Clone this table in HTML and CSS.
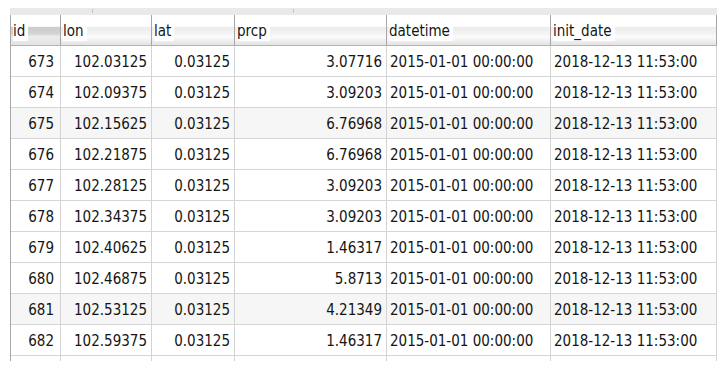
FILE: index.html
```html
<!DOCTYPE html>
<html lang="en">
<head>
    <meta charset="UTF-8">
    <title>Query Result</title>
    <link rel="stylesheet" href="styles.css">
</head>
<body>
    <div class="wrap">
        <div class="strip">
            <span class="tick tick-a"></span>
            <span class="tick tick-b"></span>
        </div>
        <div class="grid" id="grid">
            <div class="hd sorted"><span>id</span></div>
            <div class="hd"><span>lon</span></div>
            <div class="hd"><span>lat</span></div>
            <div class="hd"><span>prcp</span></div>
            <div class="hd"><span>datetime</span></div>
            <div class="hd"><span>init_date</span></div>
        </div>
    </div>

    <script>
        const grid = document.getElementById('grid');

        const rows = [
            [673, '102.03125', '3.07716'],
            [674, '102.09375', '3.09203'],
            [675, '102.15625', '6.76968'],
            [676, '102.21875', '6.76968'],
            [677, '102.28125', '3.09203'],
            [678, '102.34375', '3.09203'],
            [679, '102.40625', '1.46317'],
            [680, '102.46875', '5.8713'],
            [681, '102.53125', '4.21349'],
            [682, '102.59375', '1.46317']
        ];

        // Build data rows
        rows.forEach(([id, lon, prcp]) => {
            const shade = (id === 675 || id === 681) ? ' shade' : '';
            grid.insertAdjacentHTML('beforeend', `
                <div class="cell num${shade}"><span>${id}</span></div>
                <div class="cell num${shade}"><span>${lon}</span></div>
                <div class="cell num${shade}"><span>0.03125</span></div>
                <div class="cell num${shade}"><span>${prcp}</span></div>
                <div class="cell${shade}"><span>2015-01-01 00:00:00</span></div>
                <div class="cell${shade}"><span>2018-12-13 11:53:00</span></div>
            `);
        });

        // Partial row cut off at the bottom
        for (let i = 0; i < 6; i++) {
            grid.insertAdjacentHTML('beforeend', '<div class="cell stub"></div>');
        }
    </script>
</body>
</html>
```

FILE: styles.css
```css
body {
    margin: 0;
    background-color: white;
    font-family: "Liberation Sans Narrow", "DejaVu Sans Condensed", sans-serif;
    font-size: 15px;
    color: #151515;
}
.wrap {
    padding: 8px 0 0 10px;
    width: 707px;
}
.strip {
    position: relative;
    height: 7px;
    background-color: #e9e9e9;
}
.tick {
    position: absolute;
    top: 1px;
    width: 1px;
    height: 4px;
    background-color: #c4c4c4;
}
.tick-a { left: 82px; }
.tick-b { left: 283px; }
.grid {
    display: grid;
    grid-template-columns: 50px 91px 83px 152px 164px 166px;
    border-left: 1px solid #a8a8a8;
}
.hd,
.cell {
    box-sizing: border-box;
    height: 31px;
    display: flex;
    align-items: center;
    padding: 1px 4px 0 3px;
    white-space: nowrap;
    overflow: hidden;
}
.hd {
    border-right: 1px solid #a6a6a6;
    border-bottom: 1px solid #b4b4b4;
    background: linear-gradient(#ffffff 0, #ffffff 38%, #ececec 40%, #f3f3f3 62%, #fbfbfb 72%, #e3e3e3 100%);
    padding-left: 2px;
}
.hd span {
    background-color: white;
    padding-right: 3px;
    line-height: 20px;
}
.hd.sorted {
    background: linear-gradient(#ffffff 0, #ffffff 38%, #cdcdcd 40%, #d2d2d2 62%, #ededed 72%, #e3e3e3 100%);
}
.cell {
    border-right: 1px solid #d3d3d3;
    border-bottom: 1px solid #d6d6d6;
}
.cell.num {
    justify-content: flex-end;
    padding-right: 4px;
}
.cell.num:first-child,
.grid > .cell.num:nth-child(6n+1) {
    padding-right: 6px;
}
.shade {
    background-color: #f5f6f5;
}
.cell.stub {
    height: 5px;
    border-bottom: none;
}
```
